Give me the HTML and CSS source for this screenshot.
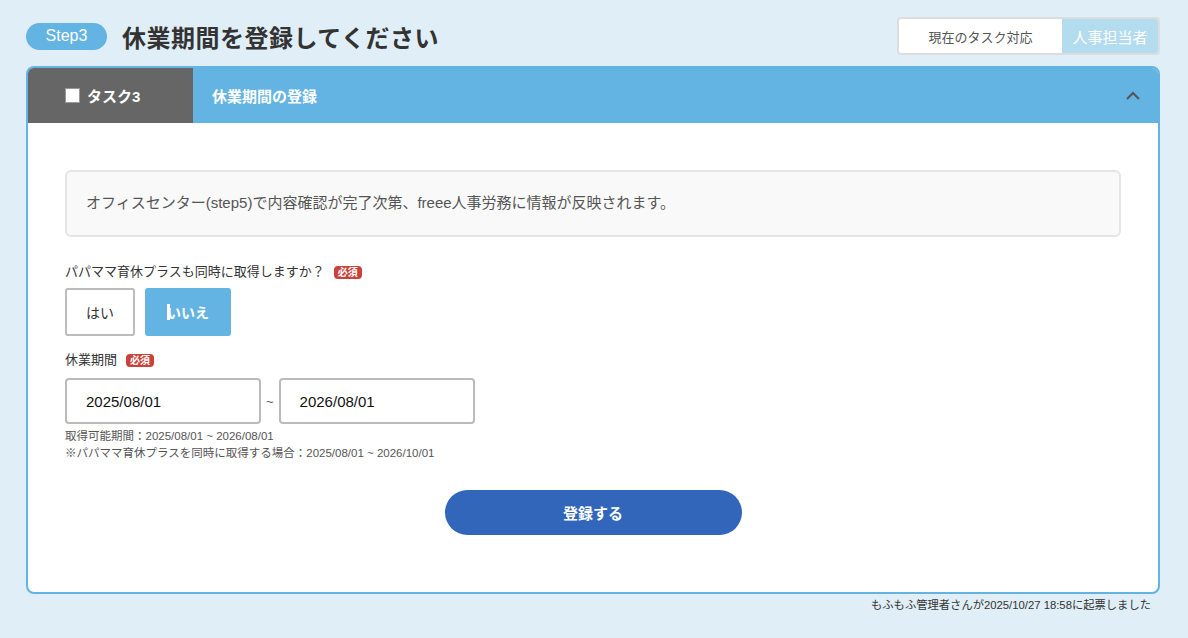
FILE: index.html
```html
<!DOCTYPE html>
<html lang="ja">
<head>
    <meta charset="UTF-8">
    <meta name="viewport" content="width=device-width, initial-scale=1.0">
    <title>休業期間の登録</title>
    <link rel="stylesheet" href="styles.css">
</head>
<body>
    <div class="page">
        <div class="page-head">
            <div class="head-left">
                <span class="step">Step3</span>
                <h1>休業期間を登録してください</h1>
            </div>
            <div class="owner">
                <span class="owner-label">現在のタスク対応</span>
                <span class="owner-value">人事担当者</span>
            </div>
        </div>

        <div class="card">
            <div class="card-head">
                <div class="task-tab">
                    <span class="checkbox"></span>
                    <span>タスク3</span>
                </div>
                <div class="task-title">休業期間の登録</div>
                <svg class="chevron" width="16" height="10" viewBox="0 0 16 10">
                    <path d="M2 8 L8 2 L14 8" fill="none" stroke="#555" stroke-width="2"/>
                </svg>
            </div>

            <div class="card-body">
                <div class="notice">オフィスセンター(step5)で内容確認が完了次第、freee人事労務に情報が反映されます。</div>

                <div class="field">
                    <div class="label">パパママ育休プラスも同時に取得しますか？ <span class="required">必須</span></div>
                    <div class="choices">
                        <button class="choice">はい</button>
                        <button class="choice active"><span class="caret"></span>いいえ</button>
                    </div>
                </div>

                <div class="field">
                    <div class="label">休業期間 <span class="required">必須</span></div>
                    <div class="range">
                        <input class="date" type="text" value="2025/08/01">
                        <span class="tilde">~</span>
                        <input class="date" type="text" value="2026/08/01">
                    </div>
                    <p class="hint">取得可能期間：2025/08/01 ~ 2026/08/01</p>
                    <p class="hint">※パパママ育休プラスを同時に取得する場合：2025/08/01 ~ 2026/10/01</p>
                </div>

                <div class="submit-row">
                    <button class="submit">登録する</button>
                </div>
            </div>
        </div>

        <div class="footnote">もふもふ管理者さんが2025/10/27 18:58に起票しました</div>
    </div>
</body>
</html>
```

FILE: styles.css
```css
:root {
    --bg: #e0eef7;
    --blue: #63b3e3;
    --light-blue: #b3dcee;
    --navy: #3166bb;
    --red: #c9423a;
    --text: #333;
    --muted: #555;
    --line: #bbb;
}

* {
    margin: 0;
    padding: 0;
    box-sizing: border-box;
    font-family: "Liberation Sans", "Noto Sans CJK JP", sans-serif;
}

body {
    background: var(--bg);
    color: var(--text);
}

.page {
    padding: 17px 28px 0 26px;
}

.page-head {
    display: flex;
    justify-content: space-between;
    align-items: center;
    height: 38px;
}

.head-left {
    display: flex;
    align-items: center;
    gap: 15px;
}

.step {
    background: var(--blue);
    color: #fff;
    font-size: 16px;
    width: 81px;
    height: 27px;
    border-radius: 14px;
    display: flex;
    align-items: center;
    justify-content: center;
}

h1 {
    font-size: 24px;
    font-weight: 700;
    color: #333;
    letter-spacing: 0.5px;
}

.owner {
    display: flex;
    height: 38px;
    border: 2px solid #ddd;
    border-radius: 4px;
    overflow: hidden;
    background: #fff;
}

.owner-label {
    width: 163px;
    display: flex;
    align-items: center;
    justify-content: center;
    font-size: 13px;
    color: var(--muted);
}

.owner-value {
    width: 96px;
    background: var(--light-blue);
    color: #fff;
    display: flex;
    align-items: center;
    justify-content: center;
    font-size: 15px;
}

.card {
    margin-top: 11px;
    border: 2px solid var(--blue);
    border-radius: 8px;
    background: #fff;
    overflow: hidden;
}

.card-head {
    display: flex;
    align-items: center;
    height: 55px;
    background: var(--blue);
    color: #fff;
    font-weight: 700;
}

.task-tab {
    width: 165px;
    height: 100%;
    background: #666;
    display: flex;
    align-items: center;
    gap: 7px;
    padding-left: 37px;
    font-size: 15px;
}

.checkbox {
    width: 15px;
    height: 15px;
    background: #fff;
    border: 1px solid #999;
}

.task-title {
    flex: 1;
    padding-left: 19px;
    font-size: 15px;
}

.chevron {
    margin-right: 17px;
}

.card-body {
    padding: 47px 37px 57px;
}

.notice {
    background: #f9f9f9;
    border: 2px solid #e5e5e5;
    border-radius: 6px;
    height: 67px;
    padding: 0 19px 4px;
    display: flex;
    align-items: center;
    font-size: 15px;
    color: var(--muted);
}

.field {
    margin-top: 26px;
}

.field + .field {
    margin-top: 15px;
}

.label {
    font-size: 13px;
    line-height: 18px;
    color: var(--text);
    display: flex;
    align-items: center;
    gap: 9px;
}

.required {
    background: var(--red);
    color: #fff;
    font-size: 10px;
    font-weight: 700;
    padding: 0 4px;
    height: 13px;
    line-height: 13px;
    border-radius: 4px;
}

.choices {
    display: flex;
    gap: 10px;
    margin-top: 7px;
}

.choice {
    height: 48px;
    width: 70px;
    border: 2px solid var(--line);
    border-radius: 3px;
    background: #fff;
    font-size: 14px;
    color: var(--text);
}

.choice.active {
    width: 86px;
    background: var(--blue);
    border-color: var(--blue);
    color: #fff;
    font-weight: 700;
    display: flex;
    align-items: center;
    justify-content: center;
}

.caret {
    width: 3px;
    height: 16px;
    background: #fff;
    margin-right: -3px;
}

.range {
    display: flex;
    align-items: center;
    gap: 5px;
    margin-top: 9px;
}

.date {
    width: 196px;
    height: 46px;
    border: 2px solid var(--line);
    border-radius: 4px;
    padding: 0 19px;
    font-size: 15px;
    color: #111;
}

.tilde {
    font-size: 13px;
    color: var(--muted);
}

.hint {
    font-size: 11.5px;
    color: var(--muted);
    line-height: 17px;
}

.range + .hint {
    margin-top: 4px;
}

.submit-row {
    display: flex;
    justify-content: center;
    margin-top: 28px;
}

.submit {
    width: 297px;
    height: 45px;
    border: none;
    border-radius: 23px;
    background: var(--navy);
    color: #fff;
    font-size: 15px;
    font-weight: 700;
}

.footnote {
    text-align: right;
    font-size: 11.3px;
    color: var(--text);
    padding: 2px 9px 0 0;
}
```
